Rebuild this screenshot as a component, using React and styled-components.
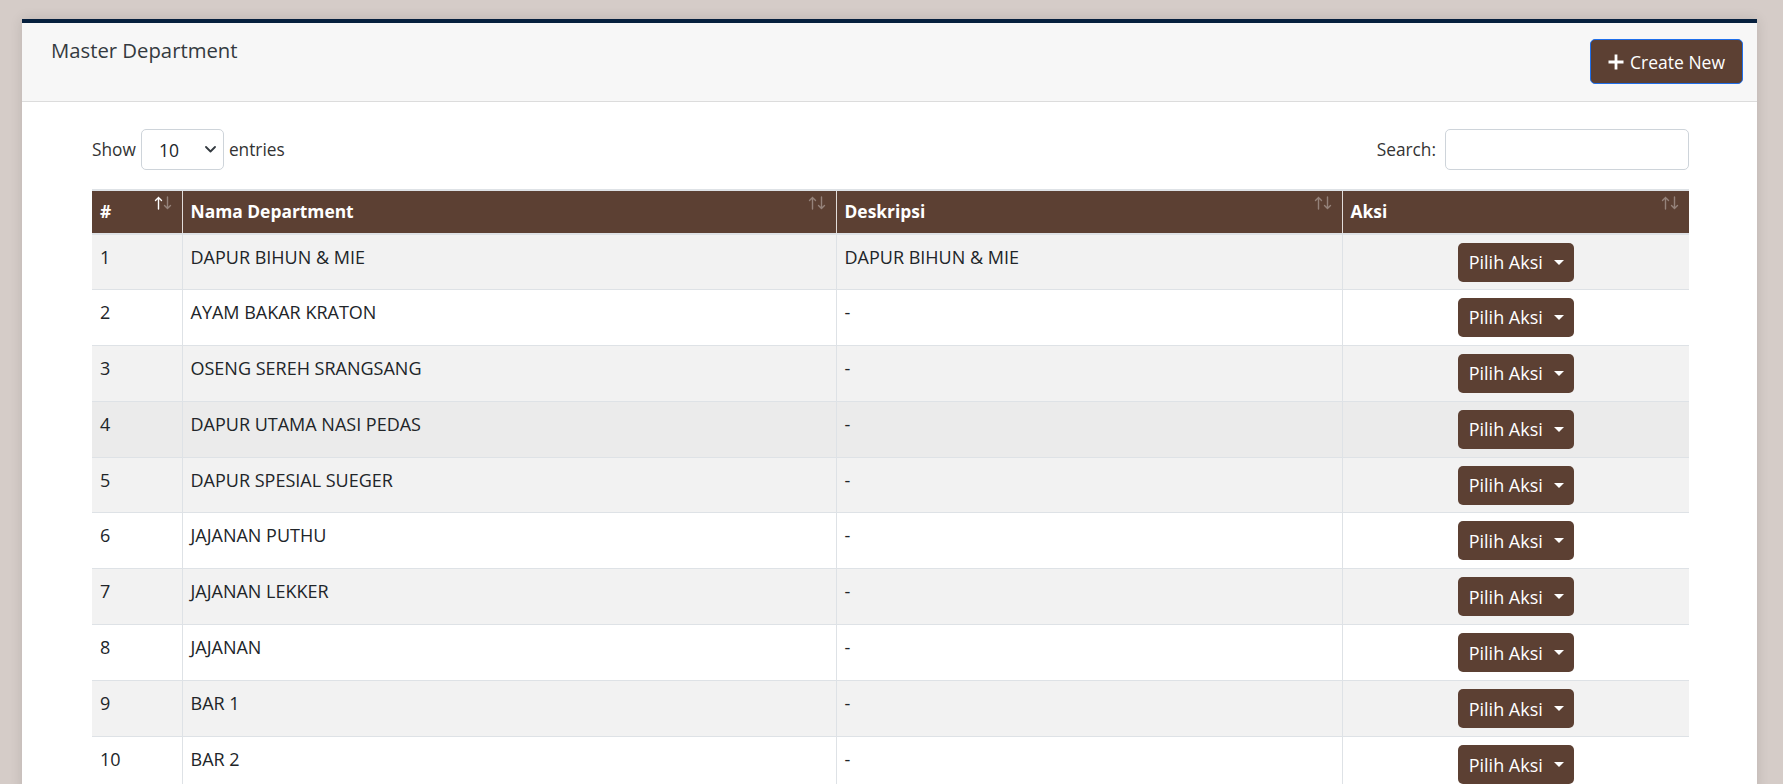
import React from "react";
import styled, { createGlobalStyle } from "styled-components";

const GlobalStyle = createGlobalStyle`
  html, body {
    margin: 0;
    padding: 0;
    background: #d5ccc8;
    font-family: "Open Sans", "Noto Sans", sans-serif;
    color: #212529;
  }
  * { box-sizing: border-box; }
`;

const Page = styled.div`
  padding: 19px 26px 0 22px;
  min-height: 784px;
`;

const Card = styled.div`
  background: #fff;
  border-top: 4px solid #06203e;
  box-shadow: 0 0 12px rgba(0, 0, 0, 0.12);
  min-height: 765px;
`;

const CardHeader = styled.div`
  display: flex;
  justify-content: space-between;
  align-items: flex-start;
  background: #f7f7f7;
  border-bottom: 1px solid #dcdcdc;
  padding: 16px 14px 17px 29px;
`;

const Title = styled.h3`
  margin: -1px 0 0;
  font-size: 20.3px;
  font-weight: 400;
  line-height: 1.2;
  color: #343a40;
`;

const CreateButton = styled.button`
  display: flex;
  align-items: center;
  gap: 6px;
  height: 45px;
  padding: 0 17px;
  background: #5c4033;
  color: #fff;
  border: 1px solid #1f6feb;
  border-radius: 5px;
  font-family: inherit;
  font-size: 17.5px;
  cursor: pointer;
`;

const CardBody = styled.div`
  padding: 27px 68px 0 70px;
`;

const Controls = styled.div`
  display: flex;
  justify-content: space-between;
  align-items: center;
  margin-bottom: 19px;
`;

const Label = styled.label`
  display: flex;
  align-items: center;
  gap: ${(p) => p.$gap || 5}px;
  font-size: 17.3px;
  color: #333;
`;

const SelectBox = styled.div`
  display: flex;
  align-items: center;
  justify-content: space-between;
  width: 83px;
  height: 41px;
  padding: 0 7px 0 17px;
  border: 1px solid #ced4da;
  border-radius: 5px;
  font-size: 17.5px;
  color: #212529;
`;

const SearchInput = styled.input`
  width: 244px;
  height: 41px;
  border: 1px solid #ced4da;
  border-radius: 5px;
  font-family: inherit;
  font-size: 17px;
  padding: 0 12px;
  outline: none;
`;

const Table = styled.table`
  width: 100%;
  table-layout: fixed;
  border-collapse: collapse;
  border-top: 2px solid #dee2e6;
  font-size: 18px;
  line-height: 1.5;
`;

const Th = styled.th`
  position: relative;
  width: ${(p) => p.$w}px;
  background: #5c4033;
  color: #fff;
  font-size: 17.4px;
  font-weight: 700;
  line-height: 25.5px;
  text-align: left;
  padding: 8px 30px 8px 8px;
  border-left: 1px solid #e2dcd9;
  border-bottom: 2px solid #dee2e6;
  &:first-child { border-left: none; }
`;

const SortIcon = styled.svg`
  position: absolute;
  top: 5px;
  right: 9px;
`;

const Tr = styled.tr`
  height: 55.9px;
  background: ${(p) => (p.$hover ? "#ebebeb" : p.$odd ? "#f2f2f2" : "#fff")};
`;

const Td = styled.td`
  padding: 9px 8px 8px;
  vertical-align: top;
  border: 1px solid #dee2e6;
  border-top: none;
  color: #212529;
  &:first-child { border-left: none; }
  &:last-child { border-right: none; }
`;

const ActionTd = styled(Td)`
  padding: 8px 8px 7px;
  text-align: center;
`;

const ActionButton = styled.button`
  display: inline-flex;
  align-items: center;
  gap: 11px;
  height: 39px;
  padding: 0 10px 0 11px;
  background: #5c4033;
  color: #fff;
  border: none;
  border-radius: 5px;
  font-family: inherit;
  font-size: 18px;
  cursor: pointer;

  &::after {
    content: "";
    border-top: 5px solid #fff;
    border-left: 5px solid transparent;
    border-right: 5px solid transparent;
  }
`;

const Sort = ({ active }) => (
  <SortIcon width="19" height="14" viewBox="0 0 19 14" fill="none" strokeWidth="1.4" strokeLinecap="round">
    <g stroke={active ? "#fff" : "rgba(255,255,255,0.35)"}>
      <path d="M4.5 13V1.5M1.5 4.5L4.5 1.5L7.5 4.5" />
    </g>
    <g stroke="rgba(255,255,255,0.35)">
      <path d="M13.5 1V12.5M10.5 9.5L13.5 12.5L16.5 9.5" />
    </g>
  </SortIcon>
);

const rows = [
  ["DAPUR BIHUN & MIE", "DAPUR BIHUN & MIE"],
  ["AYAM BAKAR KRATON", "-"],
  ["OSENG SEREH SRANGSANG", "-"],
  ["DAPUR UTAMA NASI PEDAS", "-"],
  ["DAPUR SPESIAL SUEGER", "-"],
  ["JAJANAN PUTHU", "-"],
  ["JAJANAN LEKKER", "-"],
  ["JAJANAN", "-"],
  ["BAR 1", "-"],
  ["BAR 2", "-"],
];

export default function App() {
  return (
    <Page>
      <GlobalStyle />
      <Card>
        <CardHeader>
          <Title>Master Department</Title>
          <CreateButton>
            <svg width="16" height="16" viewBox="0 0 16 16" stroke="#fff" strokeWidth="2.8">
              <path d="M8 0.5V15.5M0.5 8H15.5" />
            </svg>
            Create New
          </CreateButton>
        </CardHeader>
        <CardBody>
          <Controls>
            <Label>
              Show
              <SelectBox>
                10
                <svg width="11" height="7" viewBox="0 0 11 7" fill="none" stroke="#343a40" strokeWidth="1.8" strokeLinecap="round" strokeLinejoin="round">
                  <path d="M1 1L5.5 5.5L10 1" />
                </svg>
              </SelectBox>
              entries
            </Label>
            <Label $gap={9}>
              Search:
              <SearchInput type="search" />
            </Label>
          </Controls>
          <Table>
            <thead>
              <tr>
                <Th $w={90}>#<Sort active /></Th>
                <Th $w={654}>Nama Department<Sort /></Th>
                <Th $w={506}>Deskripsi<Sort /></Th>
                <Th $w={347}>Aksi<Sort /></Th>
              </tr>
            </thead>
            <tbody>
              {rows.map(([name, desc], i) => (
                <Tr key={i} $odd={i % 2 === 0} $hover={i === 3}>
                  <Td>{i + 1}</Td>
                  <Td>{name}</Td>
                  <Td>{desc}</Td>
                  <ActionTd>
                    <ActionButton>Pilih Aksi</ActionButton>
                  </ActionTd>
                </Tr>
              ))}
            </tbody>
          </Table>
        </CardBody>
      </Card>
    </Page>
  );
}
